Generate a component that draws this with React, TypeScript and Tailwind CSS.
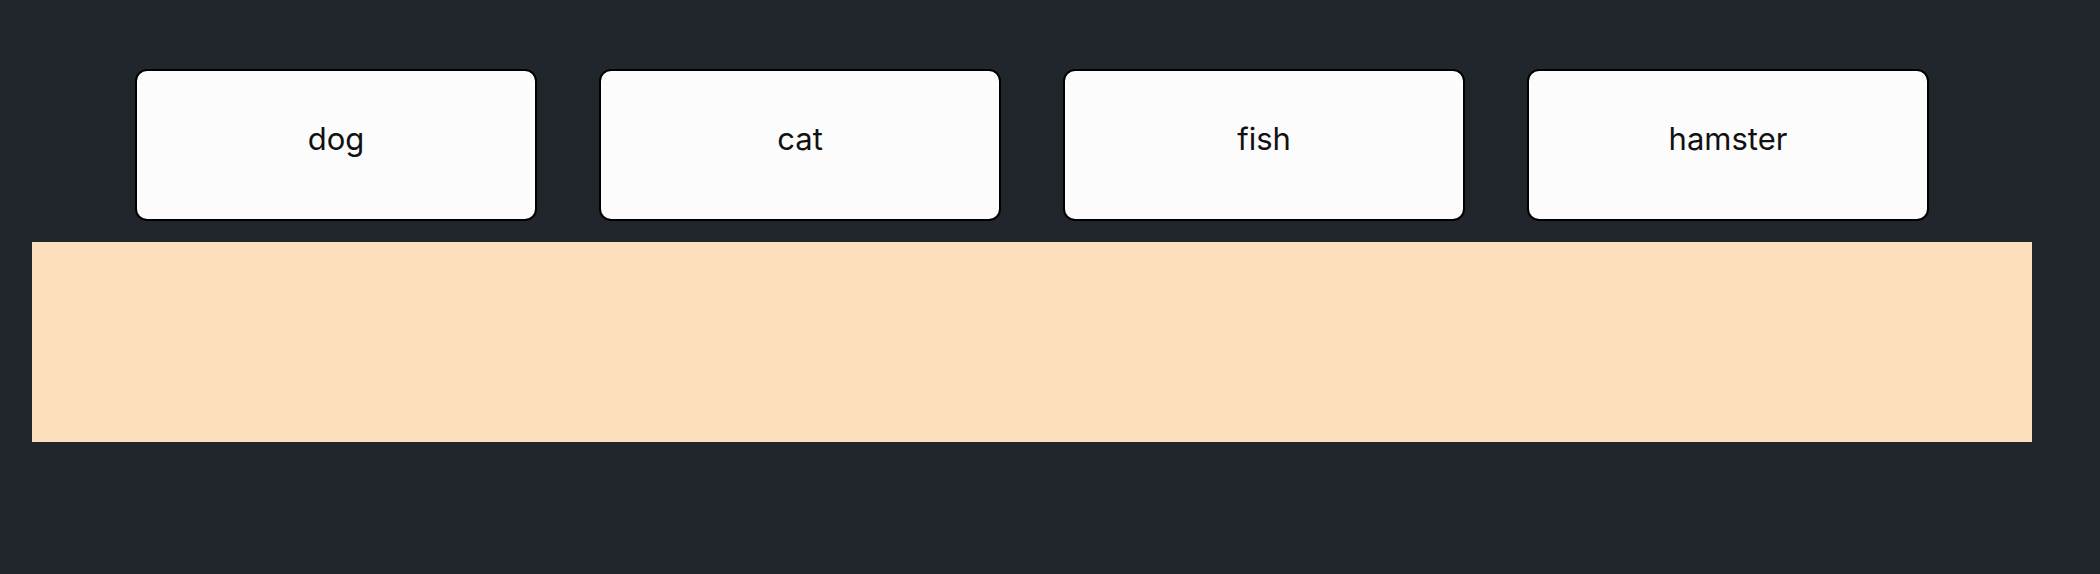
const PETS = ["dog", "cat", "fish", "hamster"];

export default function App() {
  return (
    <div
      className="w-full h-[574px] bg-[#20262b] pt-[69px] overflow-hidden"
      style={{ fontFamily: "Inter, 'Noto Sans', sans-serif" }}
    >
      {/* Pet cards */}
      <div className="flex gap-[62px] pl-[135px]">
        {PETS.map((pet) => (
          <div
            key={pet}
            className="w-[402px] h-[152px] shrink-0 flex items-center justify-center pb-[11px] rounded-[12px] border-2 border-black bg-[#fcfcfc] text-[31px] text-[#111111]"
          >
            {pet}
          </div>
        ))}
      </div>

      {/* Peach band */}
      <div className="mt-[21px] ml-[32px] w-[2000px] h-[200px] bg-[#fde0bb]" />
    </div>
  );
}
